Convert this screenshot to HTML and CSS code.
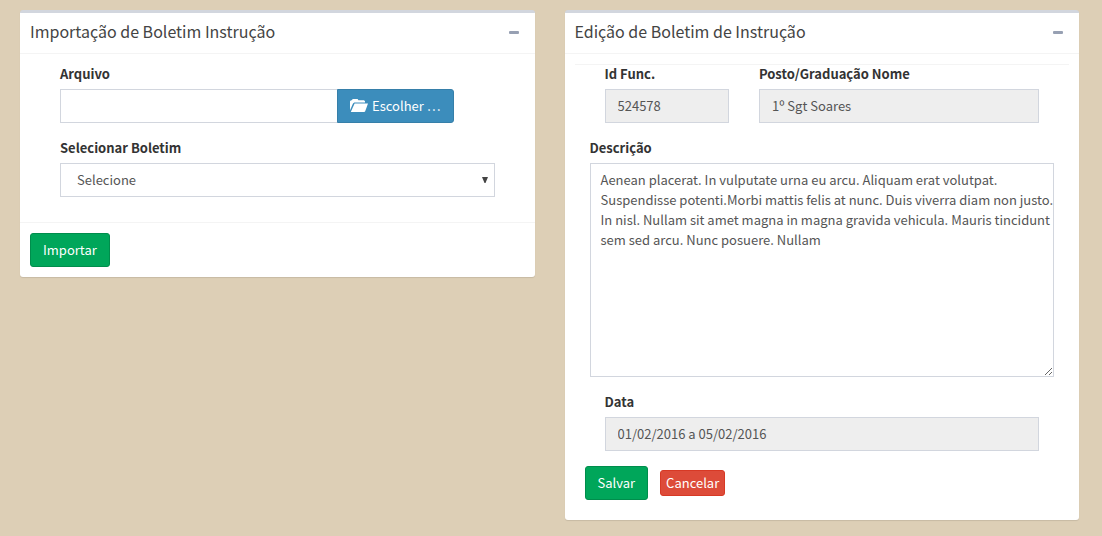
FILE: index.html
```html
<!DOCTYPE html>
<html lang="pt-BR">
<head>
<meta charset="utf-8">
<meta name="viewport" content="width=device-width, initial-scale=1">
<title>Boletim de Instrução</title>
<link rel="stylesheet" href="styles.css">
</head>
<body>
<main class="page">
  <section class="box">
    <header class="box-header">
      <h3 class="box-title">Importação de Boletim Instrução</h3>
      <button class="box-tool" type="button" aria-label="Recolher"><svg width="10" height="3" viewBox="0 0 10 3"><rect width="10" height="3" rx="1" fill="currentColor"/></svg></button>
    </header>
    <form>
      <div class="box-body">
        <div class="fields">
          <div class="form-group">
            <label for="arquivo">Arquivo</label>
            <div class="input-group">
              <input class="form-control" id="arquivo" type="text">
              <button class="btn btn-primary" type="button">
                <svg class="folder" width="18" height="14" viewBox="0 0 18 14" fill="currentColor"><path d="M0 11.2V2.2L1 1.2H2L2.6 0H7.6L8.4 1.2H14L15 2.2V3.6H4.2L3 4.4Z"/><path d="M4.6 4.6H18L15.2 12.2L14.4 13H.8Z"/></svg>
                <span>Escolher …</span>
              </button>
            </div>
          </div>
          <div class="form-group">
            <label for="boletim">Selecionar Boletim</label>
            <div class="select-wrap">
              <select class="form-control" id="boletim"><option>Selecione</option></select>
              <svg class="arrow" width="6" height="6" viewBox="0 0 6 6"><path d="M0 0H6L3.5 6H2.5Z" fill="#444"/></svg>
            </div>
          </div>
        </div>
      </div>
      <footer class="box-footer"><button class="btn btn-success" type="submit">Importar</button></footer>
    </form>
  </section>

  <section class="box">
    <header class="box-header">
      <h3 class="box-title">Edição de Boletim de Instrução</h3>
      <button class="box-tool" type="button" aria-label="Recolher"><svg width="10" height="3" viewBox="0 0 10 3"><rect width="10" height="3" rx="1" fill="currentColor"/></svg></button>
    </header>
    <form class="box-body box-body-edit">
      <div class="edit-fields">
        <div class="row">
          <div class="form-group">
            <label for="idfunc">Id Func.</label>
            <input class="form-control" id="idfunc" type="text" value="524578" readonly>
          </div>
          <div class="form-group">
            <label for="posto">Posto/Graduação Nome</label>
            <input class="form-control" id="posto" type="text" value="1º Sgt Soares" readonly>
          </div>
        </div>
        <div class="form-group">
          <label for="descricao">Descrição</label>
          <textarea class="form-control" id="descricao" rows="10">Aenean placerat. In vulputate urna eu arcu. Aliquam erat volutpat.
Suspendisse potenti.Morbi mattis felis at nunc. Duis viverra diam non justo.
In nisl. Nullam sit amet magna in magna gravida vehicula. Mauris tincidunt
sem sed arcu. Nunc posuere. Nullam</textarea>
        </div>
        <div class="form-group inset">
          <label for="data">Data</label>
          <input class="form-control" id="data" type="text" value="01/02/2016 a 05/02/2016" readonly>
        </div>
      </div>
      <div class="actions">
        <button class="btn btn-success" type="submit">Salvar</button>
        <button class="btn btn-danger btn-sm" type="button">Cancelar</button>
      </div>
    </form>
  </section>
</main>
</body>
</html>
```
FILE: styles.css
```css
* { box-sizing: border-box; }
body {
  margin: 0;
  background: #ddcfb6;
  color: #333;
  font: 400 13px/20px "Source Sans Pro", "Noto Sans CJK SC", "Noto Sans", sans-serif;
}
.page {
  display: grid;
  grid-template-columns: 1fr 1fr;
  gap: 30px;
  align-items: start;
  padding: 10px 23px 16px 20px;
}
.box {
  background: #fff;
  border-top: 3px solid #d2d6de;
  border-radius: 3px;
  box-shadow: 0 1px 1px rgba(0, 0, 0, .1);
}
.box-header {
  display: flex;
  align-items: center;
  justify-content: space-between;
  padding: 8px 11px 12px 10px;
  border-bottom: 1px solid #f4f4f4;
}
.box-title {
  margin: 0;
  color: #444;
  font-size: 16px;
  font-weight: 400;
  line-height: 20px;
}
.box-tool {
  display: flex;
  padding: 6px 5px 4px;
  border: 0;
  background: none;
  color: #97a0b3;
}
.box-body { padding: 10px; }
.box-body-edit { padding-bottom: 20px; }
.fields { padding: 0 30px; }
.form-group { margin-bottom: 15px; }
label {
  display: block;
  margin-bottom: 5px;
  font-weight: 700;
}
.form-control {
  display: block;
  width: 100%;
  height: 34px;
  padding: 5px 12px 7px;
  border: 1px solid #d2d6de;
  border-radius: 0;
  background: #fff;
  color: #555;
  font: inherit;
}
.form-control[readonly] { background: #eee; }
textarea.form-control {
  height: auto;
  padding: 6px 0 6px 10px;
  overflow: hidden;
  resize: both;
  white-space: pre;
}
select.form-control {
  padding: 6px 16px;
  appearance: none;
}
.select-wrap { position: relative; }
.arrow {
  position: absolute;
  top: 14px;
  right: 7px;
  pointer-events: none;
}
.input-group {
  display: flex;
  margin-right: 41px;
}
.input-group .form-control {
  flex: 1;
  min-width: 0;
  border-right: 0;
}
.input-group .btn { border-radius: 0 3px 3px 0; }
.btn {
  display: inline-flex;
  align-items: center;
  gap: 4px;
  padding: 6px 12px;
  border: 1px solid;
  border-radius: 3px;
  color: #fff;
  font: inherit;
  white-space: nowrap;
}
.btn-primary { background: #3c8dbc; border-color: #367fa9; }
.btn-success { background: #00a65a; border-color: #008d4c; }
.btn-danger { background: #dd4b39; border-color: #d73925; }
.btn-sm { padding: 2px 5px; }
.box-footer {
  padding: 10px;
  border-top: 1px solid #f4f4f4;
}
.edit-fields {
  padding: 0 15px;
  box-shadow: inset 0 1px #f4f4f4;
}
.row {
  display: grid;
  grid-template-columns: 4fr 9fr;
  gap: 30px;
  padding: 0 15px;
}
.inset { padding: 0 15px; }
.actions {
  display: flex;
  align-items: center;
  gap: 12px;
  padding: 0 10px;
}
```
